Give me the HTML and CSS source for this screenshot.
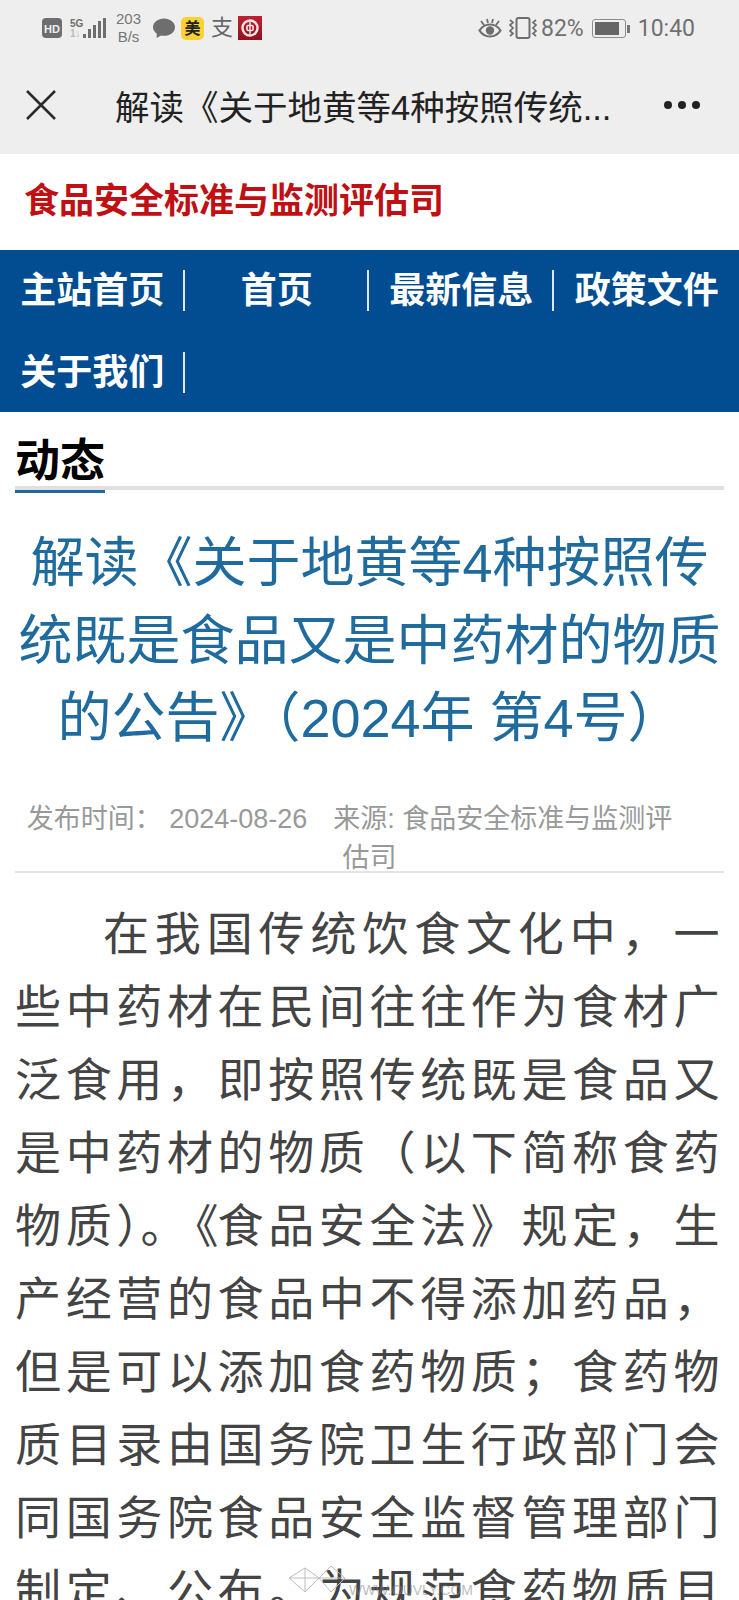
FILE: index.html
```html
<!DOCTYPE html>
<html lang="zh-CN">
<head>
    <meta charset="UTF-8">
    <meta name="viewport" content="width=device-width, initial-scale=1.0">
    <title>解读《关于地黄等4种按照传统既是食品又是中药材的物质的公告》</title>
    <link rel="stylesheet" href="styles.css">
</head>
<body>
    <div class="status-bar">
        <div class="status-left">
            <svg class="icon-hd" width="20" height="20" viewBox="0 0 20 20"><rect width="20" height="20" rx="4" fill="#6e6e6e"/><text x="10" y="14.500" class="hd-text">HD</text></svg>
            <div class="signal">
                <div class="signal-labels"><span class="label-5g">5G</span><span class="label-arrows">1↓</span></div>
                <svg width="23" height="21" viewBox="0 0 23 21"><g fill="#6e6e6e"><rect x="0" y="16" width="3" height="4"/><rect x="5" y="11" width="3" height="9"/><rect x="10" y="7" width="3" height="13"/><rect x="15" y="3" width="3" height="17"/><rect x="20" y="0" width="3" height="20"/></g></svg>
            </div>
            <div class="speed"><span>203</span><span>B/s</span></div>
            <svg width="22" height="21" viewBox="0 0 22 21"><path d="M11 .5c5.800 0 11 3.700 11 8.700s-5.200 8.600-11 8.600c-1 0-2-.1-2.900-.4L3.500 20l.4-4.300C1.600 14.100 0 11.800 0 9.200 0 4.200 5.200.5 11 .5z" fill="#6e6e6e"/></svg>
            <span class="badge-mei">美</span>
            <span class="glyph-zhi">支</span>
            <svg class="icon-boc" width="24" height="24" viewBox="0 0 24 24"><defs><linearGradient id="boc" x1="0" y1="0" x2="0" y2="1"><stop offset="0" stop-color="#c0202f"/><stop offset="1" stop-color="#8f1322"/></linearGradient></defs><rect width="24" height="24" fill="url(#boc)"/><circle cx="12" cy="12" r="7.500" fill="none" stroke="#f6e6e6" stroke-width="2.400"/><rect x="9" y="9.500" width="6" height="5" rx="1" fill="none" stroke="#f6e6e6" stroke-width="1.600"/><rect x="11.300" y="6" width="1.400" height="12" fill="#f6e6e6"/></svg>
        </div>
        <div class="status-right">
            <svg class="icon-eye" width="24" height="22" viewBox="0 0 24 22"><path d="M1.500 13.500C4 9.500 7.500 7.500 12 7.500s8 2 10.500 6c-2.500 4-6 6-10.500 6s-8-2-10.500-6z" fill="none" stroke="#6e6e6e" stroke-width="2.200"/><circle cx="12" cy="13.500" r="4.200" fill="#6e6e6e"/><path d="M3 4l3 4M21 4l-3 4M9 2l1 4M15 2l-1 4" stroke="#6e6e6e" stroke-width="1.800" fill="none"/></svg>
            <svg class="icon-vibrate" width="28" height="22" viewBox="0 0 28 22"><rect x="7.500" y="1" width="13" height="20" rx="2" fill="none" stroke="#6e6e6e" stroke-width="2"/><path d="M1 3l3 2.500-3 2.500 3 3-3 3 3 2.500-3 2.500M27 3l-3 2.500 3 2.500-3 3 3 3-3 2.500 3 2.500" fill="none" stroke="#6e6e6e" stroke-width="1.700"/></svg>
            <span class="battery-text">82%</span>
            <div class="battery"><div class="battery-level"></div></div>
            <span class="clock">10:40</span>
        </div>
    </div>

    <div class="title-bar">
        <svg class="close-icon" width="30" height="30" viewBox="0 0 30 30"><path d="M1 1l28 28M29 1L1 29" stroke="#2a2a2a" stroke-width="2.500" fill="none"/></svg>
        <div class="page-title">解读《关于地黄等4种按照传统...</div>
        <div class="more-dots"><span></span><span></span><span></span></div>
    </div>

    <div class="logo-bar">
        <div class="logo">食品安全标准与监测评估司</div>
    </div>

    <ul class="nav">
        <li>主站首页</li>
        <li>首页</li>
        <li>最新信息</li>
        <li class="no-line">政策文件</li>
        <li>关于我们</li>
    </ul>

    <div class="content">
        <h2 class="section-title"><span>动态</span></h2>
        <h1 class="article-title">解读《关于地黄等4种按照传统既是食品又是中药材的物质的公告》&#xFF08;2024年 第4号&#xFF09;</h1>
        <div class="article-meta"><span>发布时间&#xFF1A; 2024-08-26</span><span class="meta-source">来源: 食品安全标准与监测评估司</span></div>
        <p class="article-body">在我国传统饮食文化中&#xFF0C;一些中药材在民间往往作为食材广泛食用&#xFF0C;即按照传统既是食品又是中药材的物质&#xFF08;以下简称食药物质<span class="paren-tight">&#xFF09;</span><span class="stop-tight">。</span><span class="book-tight">《</span>食品安全法》规定&#xFF0C;生产经营的食品中不得添加药品&#xFF0C;但是可以添加食药物质&#xFF1B;食药物质目录由国务院卫生行政部门会同国务院食品安全监督管理部门制定、公布。为规范食药物质目录管理&#xFF0C;国家卫生健康委</p>
    </div>

    <div class="watermark">
        <svg width="64" height="34" viewBox="0 0 64 34"><path d="M4 14L20 4l14 10-14 14zM20 4v24M4 14h30M34 14L46 2l14 12-14 14zM34 14h26" fill="none" stroke="#bdbdbd" stroke-width="1"/></svg>
        <span>WWW.OUVLY.COM</span>
    </div>
</body>
</html>
```
FILE: styles.css
```css
html {
    height: 1600px;
    overflow: hidden;
}

body {
    margin: 0;
    height: 1600px;
    overflow: hidden;
    position: relative;
    background-color: #ffffff;
    font-family: "Liberation Sans", "Noto Sans CJK SC", sans-serif;
}

.status-bar {
    height: 56px;
    padding: 0 44px 0 42px;
    background-color: #eeeeee;
    display: flex;
    justify-content: space-between;
    align-items: center;
    color: #6e6e6e;
}

.status-left,
.status-right {
    display: flex;
    align-items: center;
}

.hd-text {
    font-size: 11px;
    font-weight: 700;
    fill: #eeeeee;
    text-anchor: middle;
}

.signal {
    display: flex;
    align-items: flex-end;
    margin-left: 8px;
    height: 21px;
}

.signal-labels {
    display: flex;
    flex-direction: column;
    font-size: 10px;
    line-height: 10px;
    font-weight: 700;
    width: 13px;
}

.label-arrows {
    color: #bdbdbd;
    white-space: nowrap;
}

.speed {
    display: flex;
    flex-direction: column;
    align-items: center;
    margin: 0 12px 0 10px;
    font-size: 15px;
    line-height: 18px;
    color: #777777;
}

.badge-mei {
    width: 23px;
    height: 23px;
    margin-left: 6px;
    border-radius: 5px;
    background-color: #fbd232;
    color: #222222;
    font-size: 16px;
    font-weight: 700;
    line-height: 23px;
    text-align: center;
}

.glyph-zhi {
    margin-left: 7px;
    font-size: 22px;
    line-height: 24px;
    color: #666666;
}

.icon-boc {
    margin-left: 5px;
}

.icon-eye {
    margin-right: 7px;
}

.icon-vibrate {
    margin-right: 4px;
}

.battery-text,
.clock {
    font-family: "Roboto", sans-serif;
    font-size: 23px;
    color: #707070;
}

.battery {
    width: 34px;
    height: 19px;
    margin: 0 0 0 8px;
    padding: 2px;
    box-sizing: border-box;
    border: 1px solid #8e8e8e;
    border-radius: 3px;
    position: relative;
}

.battery::after {
    content: "";
    position: absolute;
    right: -5px;
    top: 5px;
    width: 3px;
    height: 8px;
    background-color: #777777;
}

.battery-level {
    width: 85%;
    height: 100%;
    background-color: #666666;
}

.clock {
    margin-left: 12px;
}

.title-bar {
    height: 98px;
    background-color: #eeeeee;
    display: flex;
    align-items: center;
    padding: 0 39px 0 26px;
}

.close-icon {
    flex-shrink: 0;
    margin-right: 59px;
}

.page-title {
    flex: 1;
    font-size: 34.500px;
    color: #222222;
    white-space: nowrap;
}

.more-dots {
    display: flex;
    gap: 6px;
}

.more-dots span {
    width: 8px;
    height: 8px;
    border-radius: 50%;
    background-color: #222222;
}

.logo-bar {
    height: 96px;
    display: flex;
    align-items: center;
    padding: 0 0 2px 24px;
    box-sizing: border-box;
}

.logo {
    font-size: 35px;
    font-weight: 700;
    color: #c01014;
    line-height: 40px;
}

.nav {
    list-style: none;
    margin: 0;
    padding: 0;
    height: 162px;
    background-color: #024d92;
    display: flex;
    flex-wrap: wrap;
    align-content: flex-start;
}

.nav li {
    width: 184.500px;
    box-sizing: border-box;
    height: 41px;
    margin: 20px 0 20.500px;
    padding-left: 2px;
    border-right: 2px solid #dfe8f0;
    color: #ffffff;
    font-size: 36px;
    font-weight: 700;
    line-height: 42px;
    text-align: center;
}

.nav li.no-line {
    border-right: none;
}

.content {
    padding: 0 15px;
}

.section-title {
    margin: 0;
    border-bottom: 4px solid #e0e0e0;
    height: 74px;
    font-size: 45px;
    font-weight: 700;
    color: #000000;
    line-height: 100px;
}

.section-title span {
    display: inline-block;
    height: 78px;
    border-bottom: 3px solid #1e6a9c;
}

.article-title {
    margin: 35px 0 0;
    font-size: 54px;
    font-weight: 400;
    line-height: 77.500px;
    color: #1f6b9e;
    text-align: center;
}

.article-meta {
    margin-top: 42px;
    padding: 0 42px;
    height: 71px;
    font-size: 27px;
    line-height: 39px;
    text-indent: -40px;
    color: #999999;
    text-align: center;
    border-bottom: 2px solid #e4e4e4;
}

.meta-source {
    margin-left: 26px;
}

.article-body {
    margin: 25px 0 0;
    font-size: 46px;
    line-height: 73px;
    letter-spacing: 4.600px;
    text-indent: 88px;
    text-align: justify;
    text-spacing-trim: space-all;
    color: #444444;
}

.paren-tight {
    letter-spacing: -22px;
}

.stop-tight {
    letter-spacing: -14px;
}

.book-tight {
    letter-spacing: -1px;
}

.watermark {
    position: absolute;
    left: 285px;
    top: 1564px;
    display: flex;
    align-items: flex-end;
    font-size: 14px;
    color: rgba(130, 130, 130, 0.55);
    pointer-events: none;
}
```
